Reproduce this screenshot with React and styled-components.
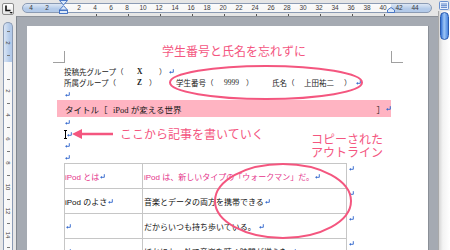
import React from 'react';
import styled, { createGlobalStyle } from 'styled-components';

const PINK = '#f4567f';
const BLUE_MARK = '#2d63cc';
const RULER_BLUE = '#b3cae9';

const GlobalStyle = createGlobalStyle`
  html, body { margin: 0; padding: 0; overflow: hidden; background: #e6e6e6; }
  body { font-family: "Noto Sans CJK JP", "Liberation Sans", sans-serif; }
`;

const Window = styled.div`
  width: 450px;
  height: 250px;
  display: flex;
  overflow: hidden;
  background: #e6e6e6;
`;

const LeftArea = styled.div`
  flex: 1;
  min-width: 0;
  display: flex;
  flex-direction: column;
`;

const TopBar = styled.div`
  height: 16px;
  flex: none;
  display: flex;
  align-items: flex-start;
  box-sizing: border-box;
  padding: 3px 0 0 2px;
`;

const TabButton = styled.div`
  width: 12px;
  height: 12px;
  box-sizing: border-box;
  border: 1px solid #8c8c8c;
  border-radius: 2px;
  background: linear-gradient(#ffffff, #e4e4e4);
  display: flex;
  align-items: center;
  justify-content: center;
  svg { display: block; }
`;

const HRuler = styled.div`
  position: relative;
  margin-left: 8px;
  width: 410px;
  height: 10px;
  box-sizing: border-box;
  border: 1px solid #8b9bb4;
  border-radius: 5px;
  display: flex;
  background:
    linear-gradient(to bottom, rgba(255,255,255,0.55), rgba(255,255,255,0) 60%),
    linear-gradient(to right, ${RULER_BLUE} 0 40px, #f7f7f7 40px 368px, ${RULER_BLUE} 368px);
`;

const HCell = styled.div`
  position: relative;
  width: 16px;
  flex: none;
  text-align: center;
  font-family: "Liberation Sans", sans-serif;
  font-size: 6.5px;
  line-height: 8px;
  color: #3a3a3a;
  ${(p) => p.$tick && `
    &::after {
      content: '';
      position: absolute;
      left: calc(50% + 1px);
      bottom: -4px;
      width: 1px;
      height: 2px;
      background: #555;
    }
  `}
`;

const MarkerSvg = styled.svg`
  position: absolute;
  left: ${(p) => p.$left}px;
  top: ${(p) => p.$top}px;
  overflow: visible;
`;

const Main = styled.div`
  flex: 1;
  min-height: 0;
  display: flex;
`;

const VRulerCol = styled.div`
  width: 16px;
  flex: none;
  box-sizing: border-box;
  padding: 6px 0 0 3px;
  display: flex;
`;

const VRuler = styled.div`
  width: 10px;
  box-sizing: border-box;
  border: 1px solid #8b9bb4;
  border-bottom: none;
  border-radius: 5px 5px 0 0;
  padding-top: 2px;
  display: flex;
  flex-direction: column;
  background:
    linear-gradient(to right, rgba(255,255,255,0.5), rgba(255,255,255,0) 70%),
    linear-gradient(to bottom, ${RULER_BLUE} 0 39px, #f7f7f7 39px);
`;

const VCell = styled.div`
  height: 12px;
  flex: none;
  display: flex;
  align-items: center;
  justify-content: center;
  font-family: "Liberation Sans", sans-serif;
  font-size: 6px;
  color: #3a3a3a;
`;

const VLabel = styled.span`
  display: inline-block;
  transform: rotate(90deg);
  line-height: 6px;
`;

const VDash = styled.span`
  width: 3px;
  height: 1px;
  background: #777;
`;

const Canvas = styled.div`
  flex: 1;
  min-width: 0;
  box-sizing: border-box;
  background: #a5aab2;
  border-left: 1px solid #80868e;
  border-top: 1px solid #8c9199;
  padding: 9px 10px 0 10px;
  display: flex;
  overflow: hidden;
`;

const Page = styled.div`
  position: relative;
  width: 401px;
  flex: none;
  background: #ffffff;
  box-shadow: 1px 0 0 #8a8f97;
  box-sizing: border-box;
  padding: 25px 0 0 26px;
`;

const CornerRow = styled.div`
  width: 350px;
  height: 12px;
  display: flex;
  justify-content: space-between;
`;

const CornerMark = styled.div`
  width: 12px;
  height: 12px;
  box-sizing: border-box;
  border-bottom: 1px solid #a0a0a0;
  ${(p) => (p.$side === 'left' ? 'border-right: 1px solid #a0a0a0;' : 'border-left: 1px solid #a0a0a0;')}
`;

const Body = styled.div`
  width: 327px;
  margin: 2.5px 0 0 11px;
  display: flex;
  flex-direction: column;
`;

const Line = styled.div`
  height: 11.5px;
  display: flex;
  align-items: center;
  white-space: nowrap;
  font-family: "Liberation Serif", "Noto Sans CJK JP", serif;
  font-size: 7.5px;
  color: #1a1a1a;
`;

const Seg = styled.span`
  display: inline-block;
  flex: none;
  width: ${(p) => (p.$w ? `${p.$w}px` : 'auto')};
  ${(p) => p.$bold && 'font-weight: bold;'}
`;

const RetSvg = styled.svg`
  width: 5px;
  height: 5px;
  flex: none;
  color: ${BLUE_MARK};
  margin-left: ${(p) => (p.$ml !== undefined ? p.$ml : 1)}px;
  display: block;
`;

const Ret = ({ ml }) => (
  <RetSvg viewBox="0 0 5 5" $ml={ml}>
    <path d="M4.3 0.2V3.3H1.5" fill="none" stroke="currentColor" strokeWidth="0.9" />
    <path d="M0.1 3.3L1.9 1.9V4.7Z" fill="currentColor" />
  </RetSvg>
);

const Band = styled.div`
  height: 17px;
  width: 334px;
  margin-left: -7px;
  box-sizing: border-box;
  padding-left: 8px;
  background: #ffb4c2;
  display: flex;
  align-items: center;
  white-space: nowrap;
  font-family: "Liberation Serif", "Noto Sans CJK JP", serif;
  font-size: 8.5px;
  color: #1a1a1a;
`;

const Spacer = styled.span`
  flex: 1;
`;

const Caret = styled.span`
  position: relative;
  width: 1px;
  height: 9px;
  background: #000;
  flex: none;
  margin-left: 1px;
  &::before, &::after {
    content: '';
    position: absolute;
    left: -1px;
    width: 3px;
    height: 1px;
    background: #000;
  }
  &::before { top: 0; }
  &::after { bottom: 0; }
`;

const TableGrid = styled.div`
  display: grid;
  grid-template-columns: 78px 205px 10px;
  grid-auto-rows: 25px;
  font-family: "Liberation Sans", "Noto Sans CJK JP", sans-serif;
  font-size: 8px;
`;

const Cell = styled.div`
  box-sizing: border-box;
  border-top: 1px solid #c6c6c6;
  border-left: 1px solid #c6c6c6;
  ${(p) => p.$last && 'border-right: 1px solid #c6c6c6; padding-left: 1px;'}
  display: flex;
  align-items: center;
  white-space: nowrap;
  overflow: hidden;
  color: ${(p) => (p.$pink ? '#e4338a' : '#111')};
`;

const EndMark = styled.div`
  padding: 3px 0 0 2px;
`;

const Overlay = styled.svg`
  position: absolute;
  left: 0;
  top: 0;
  width: 401px;
  height: 240px;
  overflow: visible;
  pointer-events: none;
`;

const Note = styled.div`
  position: absolute;
  left: ${(p) => p.$x}px;
  top: ${(p) => p.$y}px;
  color: ${PINK};
  font-family: "Noto Sans CJK JP", sans-serif;
  font-size: 12px;
  line-height: ${(p) => p.$lh || 14}px;
  white-space: nowrap;
`;

const ScrollCol = styled.div`
  width: 12px;
  flex: none;
  display: flex;
  flex-direction: column;
`;

const ScrollTopBtn = styled.div`
  height: 11px;
  flex: none;
  display: flex;
  align-items: center;
  justify-content: center;
  svg { display: block; }
`;

const ScrollTrack = styled.div`
  flex: 1;
  box-sizing: border-box;
  border-left: 1px solid #a9a9a9;
  padding: 1px 0 0 1px;
  background: linear-gradient(to right, #d6d6d6, #f3f3f3 35%, #ffffff);
`;

const Thumb = styled.div`
  width: 9px;
  height: 28px;
  box-sizing: border-box;
  border: 1px solid #2a5cb0;
  border-radius: 5px;
  background: linear-gradient(to right, #3673d6, #9cc6f6 45%, #4a86df);
`;

const H_LABELS = ['4', '2', '', ...Array.from({ length: 22 }, (_, i) => String((i + 1) * 2))];
const V_LABELS = ['-', '2', '-', '', '-', '2', '-', '4', '-', '6', '-', '8', '-', '10', '-', '12', '-', '14', '-', '16'];

export default function App() {
  return (
    <>
      <GlobalStyle />
      <Window>
        <LeftArea>
          <TopBar>
            <TabButton>
              <svg width="9" height="9" viewBox="0 0 9 9">
                <path d="M2 0.5V5.5H6.5" fill="none" stroke="#111" strokeWidth="1.6" />
                <path d="M5.5 7H8.8L7.15 8.8Z" fill="#111" />
              </svg>
            </TabButton>
            <HRuler>
              {H_LABELS.map((l, i) => {
                const v = i >= 3 ? (i - 2) * 2 : 0;
                return (
                  <HCell key={i} $tick={i >= 3 && v % 4 === 0 && v <= 40}>
                    {l}
                  </HCell>
                );
              })}
              <MarkerSvg $left={36} $top={-4} width="9" height="14" viewBox="0 0 9 14">
                <polygon points="0.5,0.5 8.5,0.5 4.5,5" fill="#dbe8f8" stroke="#3b6cc2" strokeWidth="0.9" />
                <polygon points="4.5,5.6 8.5,10 0.5,10" fill="#dbe8f8" stroke="#3b6cc2" strokeWidth="0.9" />
                <rect x="0.5" y="10.5" width="8" height="3" fill="#dbe8f8" stroke="#3b6cc2" strokeWidth="0.9" />
              </MarkerSvg>
              <MarkerSvg $left={364} $top={3} width="8" height="6" viewBox="0 0 8 6">
                <polygon points="0.5,5.5 0.5,3 4,0.5 7.5,3 7.5,5.5" fill="#dbe8f8" stroke="#3b6cc2" strokeWidth="0.9" />
              </MarkerSvg>
            </HRuler>
          </TopBar>
          <Main>
            <VRulerCol>
              <VRuler>
                {V_LABELS.map((l, i) => (
                  <VCell key={i}>{l === '-' ? <VDash /> : <VLabel>{l}</VLabel>}</VCell>
                ))}
              </VRuler>
            </VRulerCol>
            <Canvas>
              <Page>
                <CornerRow>
                  <CornerMark $side="left" />
                  <CornerMark $side="right" />
                </CornerRow>
                <Body>
                  <Line>
                    <Seg $w={73}>投稿先グループ（</Seg>
                    <Seg $w={22} $bold>X</Seg>
                    <Seg $w={9}>）</Seg>
                    <Ret ml={1} />
                  </Line>
                  <Line>
                    <Seg $w={73}>所属グループ（</Seg>
                    <Seg $w={12} $bold>Z</Seg>
                    <Seg $w={27}>）</Seg>
                    <Seg $w={48}>学生番号（</Seg>
                    <Seg $w={22}>9999</Seg>
                    <Seg $w={26}>）</Seg>
                    <Seg $w={32}>氏名（</Seg>
                    <Seg $w={40}>上田祐二</Seg>
                    <Seg $w={11}>）</Seg>
                    <Ret ml={1} />
                  </Line>
                  <Line>
                    <Ret ml={1} />
                  </Line>
                  <Band>
                    <Seg $w={48}>タイトル［</Seg>
                    <Seg>iPod が変える世界</Seg>
                    <Spacer />
                    <Seg>］</Seg>
                    <Ret ml={1} />
                  </Band>
                  <Line>
                    <Ret ml={1} />
                  </Line>
                  <Line>
                    <Caret />
                    <Ret ml={1} />
                  </Line>
                  <Line>
                    <Ret ml={1} />
                  </Line>
                  <Line>
                    <Ret ml={1} />
                  </Line>
                  <TableGrid>
                    <Cell $pink>
                      iPod とは<Ret ml={1} />
                    </Cell>
                    <Cell $pink $last>
                      iPod は、新しいタイプの「ウォークマン」だ。<Ret ml={1} />
                    </Cell>
                    <EndMark>
                      <Ret ml={0} />
                    </EndMark>
                    <Cell>
                      iPod のよさ<Ret ml={1} />
                    </Cell>
                    <Cell $last>
                      音楽とデータの両方を携帯できる<Ret ml={1} />
                    </Cell>
                    <EndMark>
                      <Ret ml={0} />
                    </EndMark>
                    <Cell>
                      <Ret ml={1} />
                    </Cell>
                    <Cell $last>
                      だからいつも持ち歩いている。<Ret ml={3} />
                    </Cell>
                    <EndMark>
                      <Ret ml={0} />
                    </EndMark>
                    <Cell>
                      <Ret ml={1} />
                    </Cell>
                    <Cell $last>
                      ほかにも、外で音楽を聴く時間が増えた<Ret ml={3} />
                    </Cell>
                    <EndMark>
                      <Ret ml={0} />
                    </EndMark>
                  </TableGrid>
                </Body>

                <Overlay viewBox="0 0 401 240">
                  <ellipse cx="239" cy="56.5" rx="96" ry="16.5" fill="none" stroke={PINK} strokeWidth="2" />
                  <ellipse cx="256" cy="175" rx="68" ry="37" fill="none" stroke={PINK} strokeWidth="2" />
                  <line x1="86" y1="108" x2="52" y2="108" stroke={PINK} strokeWidth="2.6" />
                  <polygon points="45,108 55,103 55,113" fill={PINK} />
                </Overlay>
                <Note $x={135} $y={18}>学生番号と氏名を忘れずに</Note>
                <Note $x={93} $y={101}>ここから記事を書いていく</Note>
                <Note $x={284} $y={105.5} $lh={13.5}>
                  コピーされた
                  <br />
                  アウトライン
                </Note>
              </Page>
            </Canvas>
          </Main>
        </LeftArea>
        <ScrollCol>
          <ScrollTopBtn>
            <svg width="10" height="9" viewBox="0 0 10 9">
              <rect x="0.5" y="0.5" width="9" height="8" rx="1" fill="#e8f0fb" stroke="#4a78c4" strokeWidth="0.8" />
              <line x1="2" y1="3" x2="8" y2="3" stroke="#4a78c4" strokeWidth="0.9" />
              <line x1="2" y1="4.7" x2="8" y2="4.7" stroke="#4a78c4" strokeWidth="0.9" />
              <line x1="2" y1="6.4" x2="8" y2="6.4" stroke="#4a78c4" strokeWidth="0.9" />
            </svg>
          </ScrollTopBtn>
          <ScrollTrack>
            <Thumb />
          </ScrollTrack>
        </ScrollCol>
      </Window>
    </>
  );
}
